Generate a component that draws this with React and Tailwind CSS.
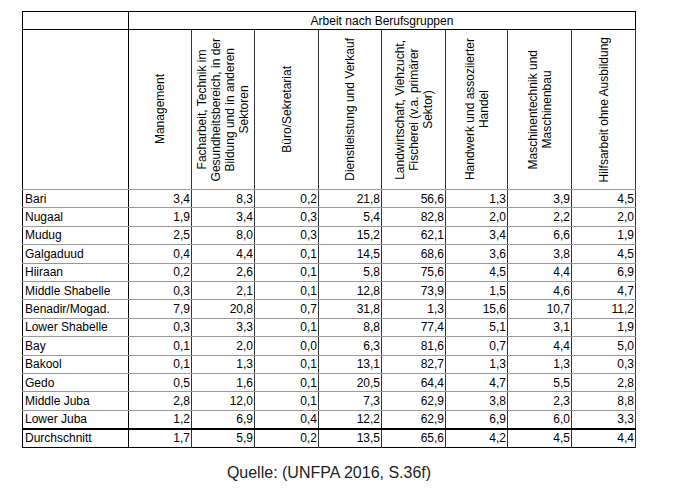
const headers = [
  ["Management"],
  ["Facharbeit, Technik im", "Gesundheitsbereich, in der", "Bildung und in anderen", "Sektoren"],
  ["Büro/Sekretariat"],
  ["Dienstleistung und Verkauf"],
  ["Landwirtschaft, Viehzucht,", "Fischerei (v.a. primärer", "Sektor)"],
  ["Handwerk und assoziierter", "Handel"],
  ["Maschinentechnik und", "Maschinenbau"],
  ["Hilfsarbeit ohne Ausbildung"],
];

const rows = [
  ["Bari", "3,4", "8,3", "0,2", "21,8", "56,6", "1,3", "3,9", "4,5"],
  ["Nugaal", "1,9", "3,4", "0,3", "5,4", "82,8", "2,0", "2,2", "2,0"],
  ["Mudug", "2,5", "8,0", "0,3", "15,2", "62,1", "3,4", "6,6", "1,9"],
  ["Galgaduud", "0,4", "4,4", "0,1", "14,5", "68,6", "3,6", "3,8", "4,5"],
  ["Hiiraan", "0,2", "2,6", "0,1", "5,8", "75,6", "4,5", "4,4", "6,9"],
  ["Middle Shabelle", "0,3", "2,1", "0,1", "12,8", "73,9", "1,5", "4,6", "4,7"],
  ["Benadir/Mogad.", "7,9", "20,8", "0,7", "31,8", "1,3", "15,6", "10,7", "11,2"],
  ["Lower Shabelle", "0,3", "3,3", "0,1", "8,8", "77,4", "5,1", "3,1", "1,9"],
  ["Bay", "0,1", "2,0", "0,0", "6,3", "81,6", "0,7", "4,4", "5,0"],
  ["Bakool", "0,1", "1,3", "0,1", "13,1", "82,7", "1,3", "1,3", "0,3"],
  ["Gedo", "0,5", "1,6", "0,1", "20,5", "64,4", "4,7", "5,5", "2,8"],
  ["Middle Juba", "2,8", "12,0", "0,1", "7,3", "62,9", "3,8", "2,3", "8,8"],
  ["Lower Juba", "1,2", "6,9", "0,4", "12,2", "62,9", "6,9", "6,0", "3,3"],
];

const total = ["Durchschnitt", "1,7", "5,9", "0,2", "13,5", "65,6", "4,2", "4,5", "4,4"];

const colWidths = ["w-[106px]", "w-[63px]", "w-[63px]", "w-[64px]", "w-[63px]", "w-[64px]", "w-[62px]", "w-[64px]", "w-[64px]"];

export default function App() {
  return (
    <div className="min-h-screen bg-white pt-[11px] font-['Liberation_Sans',Arial,sans-serif] text-[12px] text-black">
      <table className="ml-[22px] table-fixed border-collapse border border-black">
        <colgroup>
          {colWidths.map((w, i) => (
            <col key={i} className={w} />
          ))}
        </colgroup>
        <thead>
          <tr className="h-[18px]">
            <th className="border-r border-b border-black p-0" />
            <th colSpan={8} className="border-b border-black p-0 text-center font-normal leading-[14px]">
              Arbeit nach Berufsgruppen
            </th>
          </tr>
          <tr>
            <th className="border-r border-b border-r-black border-b-[#999] p-0" />
            {headers.map((lines, i) => (
              <th key={i} className="border-r border-b border-r-[#333] border-b-[#999] p-0 font-normal">
                <div className="flex h-[159px] items-center justify-center">
                  <div className="rotate-180 whitespace-nowrap text-center leading-[14px] [writing-mode:vertical-rl]">
                    {lines.map((l, j) => (
                      <div key={j}>{l}</div>
                    ))}
                  </div>
                </div>
              </th>
            ))}
          </tr>
        </thead>
        <tbody>
          {rows.map((r) => (
            <tr key={r[0]} className="h-[18.4px]">
              <td className="border-r border-b border-r-black border-b-[#999] py-0 pl-[2px] leading-[14px]">{r[0]}</td>
              {r.slice(1).map((v, i) => (
                <td key={i} className="border-r border-b border-r-[#333] border-b-[#999] py-0 pr-[1px] text-right leading-[14px]">
                  {v}
                </td>
              ))}
            </tr>
          ))}
          <tr className="h-[19px] border-t-2 border-black">
            <td className="border-r border-black py-0 pl-[2px] leading-[14px]">{total[0]}</td>
            {total.slice(1).map((v, i) => (
              <td key={i} className="border-r border-r-[#333] py-0 pr-[1px] text-right leading-[14px]">
                {v}
              </td>
            ))}
          </tr>
        </tbody>
      </table>
      <p className="mt-[13px] w-[614px] ml-[22px] text-center text-[16px] text-[#222]">Quelle: (UNFPA 2016, S.36f)</p>
    </div>
  );
}
